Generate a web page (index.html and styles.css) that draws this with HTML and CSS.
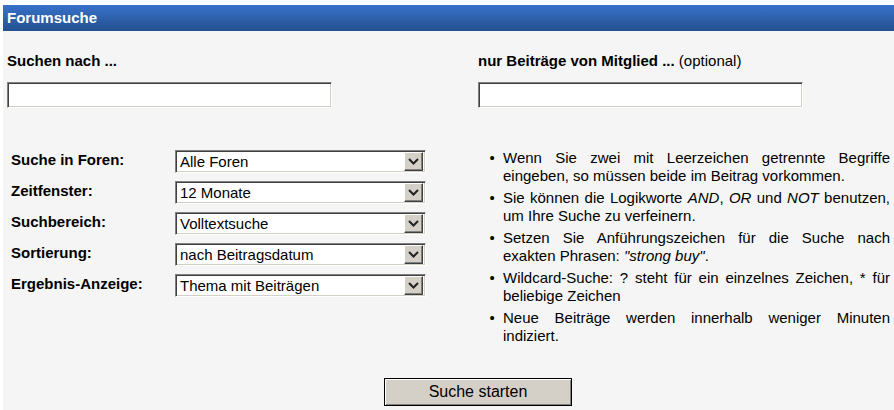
FILE: index.html
```html
<!DOCTYPE html>
<html>
<head>
  <title>Forumsuche</title>
  <link rel="stylesheet" href="styles.css">
</head>
<body>
  <div class="panel">
    <div class="panel-title">Forumsuche</div>

    <div class="top-fields">
      <div class="field">
        <label for="query">Suchen nach ...</label>
        <input type="text" id="query">
      </div>
      <div class="field">
        <label for="member">nur Beiträge von Mitglied ... <span class="hint">(optional)</span></label>
        <input type="text" id="member">
      </div>
    </div>

    <div class="options">
      <div class="option-list">
        <div class="option-row">
          <span class="option-label">Suche in Foren:</span>
          <div class="select"><span class="select-value">Alle Foren</span><span class="select-arrow"><svg width="11" height="7" viewBox="0 0 11 7"><path d="M1 1l4.5 4.5L10 1" fill="none" stroke="#222" stroke-width="2"/></svg></span></div>
        </div>
        <div class="option-row">
          <span class="option-label">Zeitfenster:</span>
          <div class="select"><span class="select-value">12 Monate</span><span class="select-arrow"><svg width="11" height="7" viewBox="0 0 11 7"><path d="M1 1l4.5 4.5L10 1" fill="none" stroke="#222" stroke-width="2"/></svg></span></div>
        </div>
        <div class="option-row">
          <span class="option-label">Suchbereich:</span>
          <div class="select"><span class="select-value">Volltextsuche</span><span class="select-arrow"><svg width="11" height="7" viewBox="0 0 11 7"><path d="M1 1l4.5 4.5L10 1" fill="none" stroke="#222" stroke-width="2"/></svg></span></div>
        </div>
        <div class="option-row">
          <span class="option-label">Sortierung:</span>
          <div class="select"><span class="select-value">nach Beitragsdatum</span><span class="select-arrow"><svg width="11" height="7" viewBox="0 0 11 7"><path d="M1 1l4.5 4.5L10 1" fill="none" stroke="#222" stroke-width="2"/></svg></span></div>
        </div>
        <div class="option-row">
          <span class="option-label">Ergebnis-Anzeige:</span>
          <div class="select"><span class="select-value">Thema mit Beiträgen</span><span class="select-arrow"><svg width="11" height="7" viewBox="0 0 11 7"><path d="M1 1l4.5 4.5L10 1" fill="none" stroke="#222" stroke-width="2"/></svg></span></div>
        </div>
      </div>

      <ul class="tips">
        <li>Wenn Sie zwei mit Leerzeichen getrennte Begriffe eingeben, so müssen beide im Beitrag vorkommen.</li>
        <li>Sie können die Logikworte <em>AND</em>, <em>OR</em> und <em>NOT</em> benutzen, um Ihre Suche zu verfeinern.</li>
        <li>Setzen Sie Anführungszeichen für die Suche nach exakten Phrasen: <em>"strong buy"</em>.</li>
        <li>Wildcard-Suche: ? steht für ein einzelnes Zeichen, * für beliebige Zeichen</li>
        <li>Neue Beiträge werden innerhalb weniger Minuten indiziert.</li>
      </ul>
    </div>

    <div class="actions">
      <button type="submit">Suche starten</button>
    </div>
  </div>
</body>
</html>
```

FILE: styles.css
```css
* {
  box-sizing: border-box;
}

body {
  margin: 5px 0 0 3px;
  background: #ffffff;
  font-family: "Liberation Sans", Arial, sans-serif;
  color: #000000;
}

.panel {
  background: #f5f5f5;
  height: 405px;
}

.panel-title {
  height: 26px;
  line-height: 26px;
  padding-left: 4px;
  font-size: 15px;
  font-weight: bold;
  color: #ffffff;
  background: linear-gradient(#3772c9, #24508f);
}

.top-fields {
  display: grid;
  grid-template-columns: 471px 1fr;
  padding: 21px 0 0 4px;
}

.field label {
  display: block;
  font-size: 15px;
  font-weight: bold;
  line-height: 17px;
  margin-bottom: 13px;
}

.field .hint {
  font-weight: normal;
}

.field input {
  display: block;
  width: 325px;
  height: 26px;
  padding: 2px 4px;
  font-family: inherit;
  font-size: 15px;
  background: #ffffff;
  border: 1px solid;
  border-color: #808080 #ffffff #ffffff #808080;
  box-shadow: inset 1px 1px #404040, inset -1px -1px #d4d0c8;
  outline: none;
}

.options {
  display: grid;
  grid-template-columns: 471px 1fr;
  margin-top: 42px;
}

.option-list {
  display: flex;
  flex-direction: column;
  gap: 8px;
  padding-left: 8px;
}

.option-row {
  display: flex;
}

.option-label {
  width: 164px;
  padding-top: 1px;
  font-size: 15px;
  font-weight: bold;
  line-height: 17px;
}

.select {
  display: flex;
  align-items: center;
  width: 251px;
  height: 23px;
  background: #ffffff;
  border: 1px solid;
  border-color: #808080 #ffffff #ffffff #808080;
  box-shadow: inset 1px 1px #404040, inset -1px -1px #d4d0c8;
  padding: 2px;
}

.select-value {
  flex: 1;
  padding-left: 2px;
  font-size: 15px;
  line-height: 17px;
}

.select-arrow {
  display: flex;
  align-items: center;
  justify-content: center;
  width: 19px;
  height: 19px;
  background: #d4d0c8;
  border: 1px solid;
  border-color: #ffffff #404040 #404040 #ffffff;
  box-shadow: inset -1px -1px #808080;
}

.tips {
  margin: -1px 0 0;
  padding: 0 4px 0 29px;
  font-size: 15px;
  line-height: 18px;
  text-align: justify;
  list-style-type: "•\00a0\00a0";
}

.tips li {
  margin-bottom: 4px;
}

.actions {
  padding: 29px 0 0 381px;
}

.actions button {
  width: 188px;
  height: 28px;
  font-family: inherit;
  font-size: 16px;
  color: #000000;
  background: #d4d0c8;
  border: 1px solid #000000;
  box-shadow: inset 1px 1px #ffffff, inset -1px -1px #808080;
  padding: 0;
}
```
